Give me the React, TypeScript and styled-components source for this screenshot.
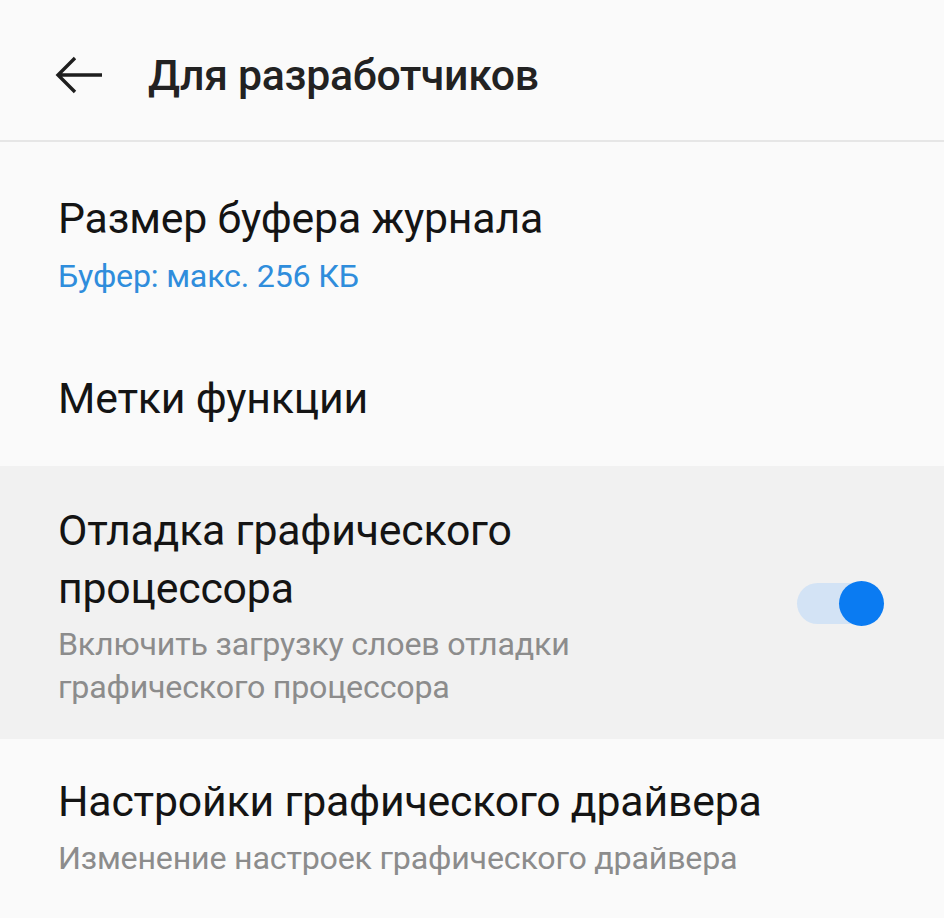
import styled, { createGlobalStyle } from "styled-components";

const GlobalStyle = createGlobalStyle`
  html, body {
    margin: 0;
    padding: 0;
    background: #fafafa;
  }
  body {
    font-family: Roboto, "Noto Sans", "DejaVu Sans", sans-serif;
    -webkit-font-smoothing: antialiased;
  }
`;

const Page = styled.div`
  width: 944px;
  min-height: 918px;
  background: #fafafa;
  overflow: hidden;
`;

const Header = styled.header`
  height: 142px;
  display: flex;
  align-items: center;
  padding: 10px 0 0 54px;
  gap: 44px;
  border-bottom: 2px solid #e6e6e6;
  box-sizing: border-box;
`;

const BackButton = styled.button`
  border: none;
  background: none;
  padding: 0;
  width: 50px;
  height: 40px;
  display: flex;
  align-items: center;
  color: #1e1e1e;
`;

const HeaderTitle = styled.h1`
  margin: 0;
  font-size: 42.8px;
  font-weight: 500;
  color: #222;
  letter-spacing: -0.3px;
`;

const List = styled.div`
  display: flex;
  flex-direction: column;
`;

const Item = styled.div<{ $active?: boolean; $pad: string }>`
  display: flex;
  align-items: center;
  justify-content: space-between;
  padding: ${({ $pad }) => $pad};
  padding-left: 58px;
  padding-right: 58px;
  background: ${({ $active }) => ($active ? "#f1f1f1" : "transparent")};
`;

const Texts = styled.div<{ $wide?: boolean }>`
  display: flex;
  flex-direction: column;
  max-width: ${({ $wide }) => ($wide ? "none" : "600px")};
`;

const Title = styled.div`
  font-size: 42.8px;
  line-height: 58px;
  color: #141414;
  letter-spacing: -0.2px;
`;

const Summary = styled.div<{ $accent?: boolean; $gap: number }>`
  font-size: 32.2px;
  line-height: 43px;
  color: ${({ $accent }) => ($accent ? "#2f8ddc" : "#8c8c8c")};
  margin-top: ${({ $gap }) => $gap}px;
  letter-spacing: -0.2px;
`;

const Toggle = styled.div<{ $on: boolean }>`
  position: relative;
  width: 87px;
  height: 45px;
  flex-shrink: 0;
  margin-right: 2px;
  margin-bottom: 4px;
`;

const Track = styled.div`
  position: absolute;
  left: 0;
  top: 2px;
  width: 78px;
  height: 41px;
  border-radius: 21px;
  background: #d3e3f5;
`;

const Knob = styled.div`
  position: absolute;
  right: 0;
  top: 0;
  width: 45px;
  height: 45px;
  border-radius: 50%;
  background: #0a7bf2;
`;

const ArrowLeft = () => (
  <svg width="50" height="40" viewBox="0 0 50 40" fill="none">
    <path
      d="M48 20H4M21 3L4 20l17 17"
      stroke="currentColor"
      strokeWidth="3.4"
      strokeLinecap="butt"
      strokeLinejoin="miter"
    />
  </svg>
);

export default function App() {
  return (
    <Page>
      <GlobalStyle />
      <Header>
        <BackButton aria-label="Назад">
          <ArrowLeft />
        </BackButton>
        <HeaderTitle>Для разработчиков</HeaderTitle>
      </Header>
      <List>
        <Item $pad="47px 0 35px">
          <Texts>
            <Title>Размер буфера журнала</Title>
            <Summary $accent $gap={8}>
              Буфер: макс. 256 КБ
            </Summary>
          </Texts>
        </Item>
        <Item $pad="36px 0 39px">
          <Texts>
            <Title>Метки функции</Title>
          </Texts>
        </Item>
        <Item $active $pad="35px 0 30px">
          <Texts>
            <Title>Отладка графического процессора</Title>
            <Summary $gap={6}>
              Включить загрузку слоев отладки графического процессора
            </Summary>
          </Texts>
          <Toggle $on>
            <Track />
            <Knob />
          </Toggle>
        </Item>
        <Item $pad="33px 0 30px">
          <Texts $wide>
            <Title>Настройки графического драйвера</Title>
            <Summary $gap={7}>Изменение настроек графического драйвера</Summary>
          </Texts>
        </Item>
      </List>
    </Page>
  );
}
